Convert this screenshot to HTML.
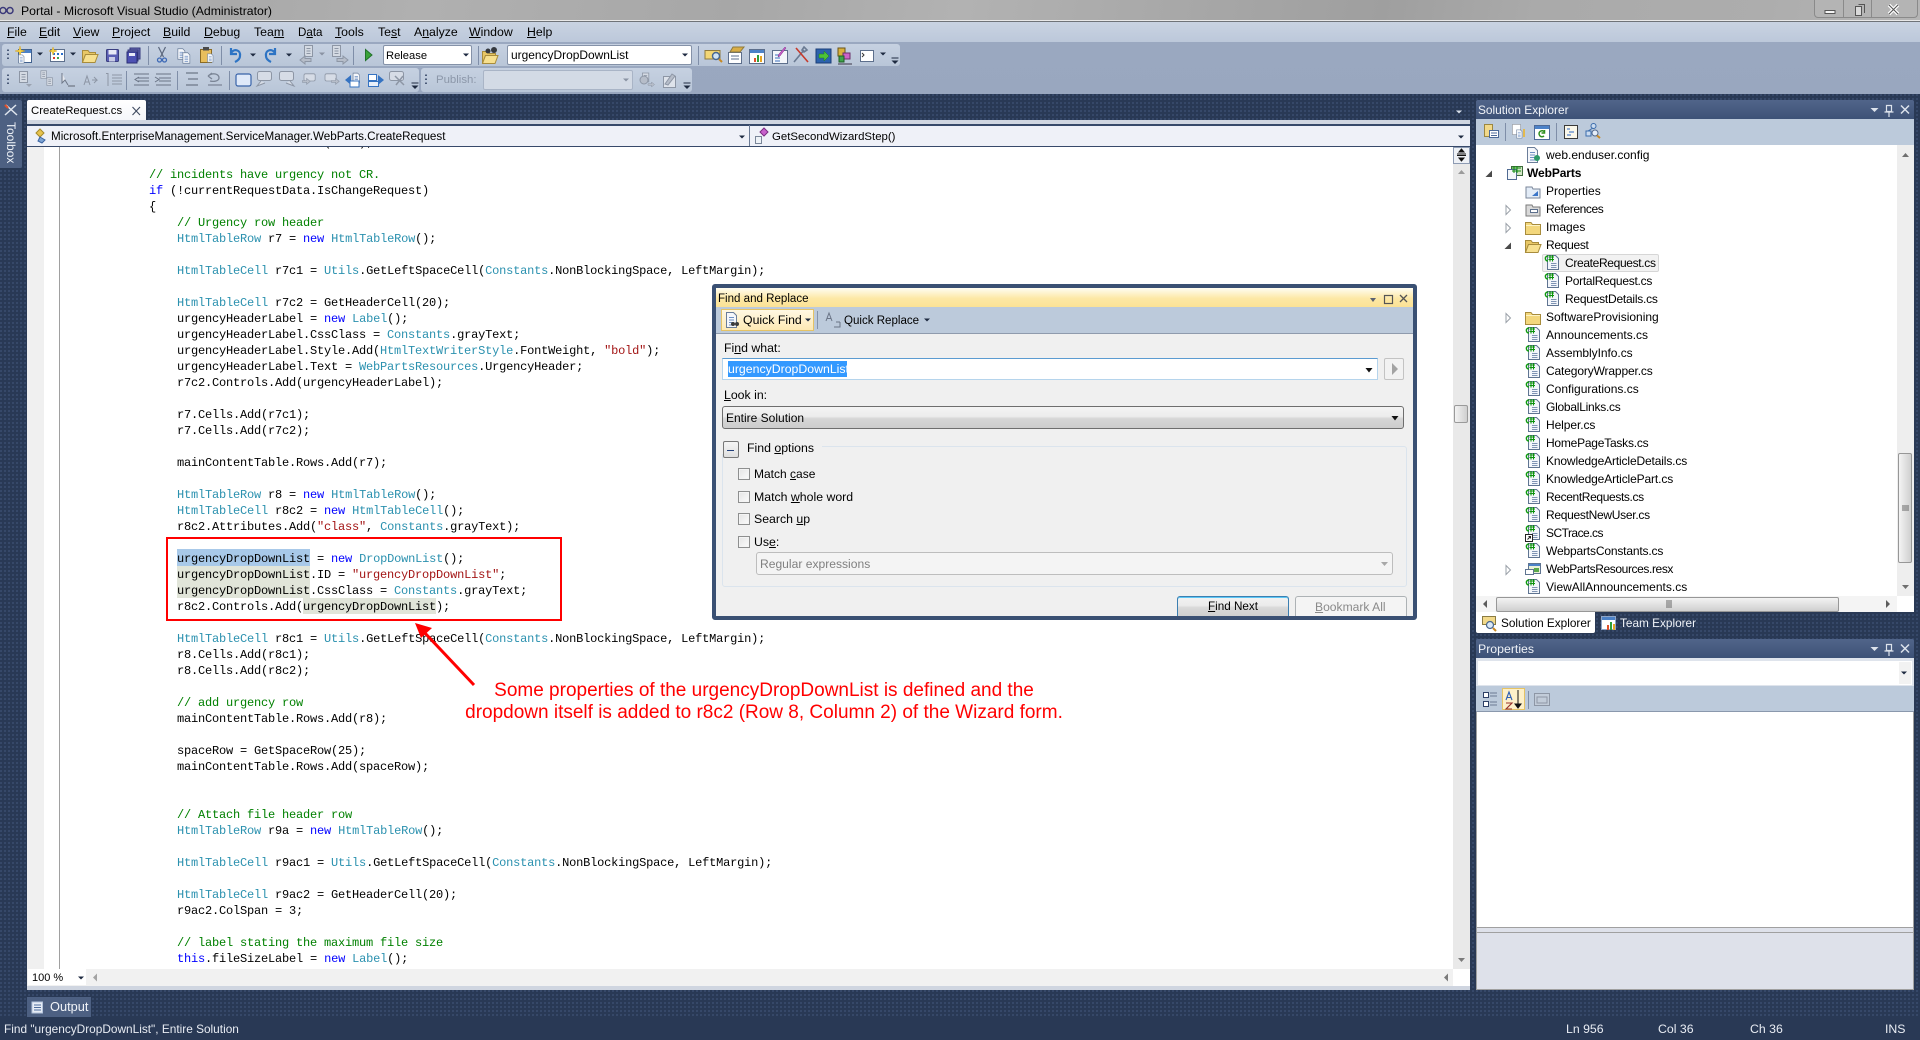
<!DOCTYPE html>
<html lang="en"><head><meta charset="utf-8"><title>Portal - Microsoft Visual Studio (Administrator)</title>
<style>
html,body{margin:0;padding:0;width:1920px;height:1040px;overflow:hidden;background:#293955;}
*{box-sizing:border-box}
body{position:relative;font:12px/16px "Liberation Sans",sans-serif;color:#000}
.a{position:absolute}
.t{position:absolute;white-space:nowrap;font:12.3px/16px "Liberation Sans",sans-serif}
.dots{background-color:#293955;background-image:radial-gradient(circle at 1px 1px,#3a4c6e .8px,transparent 1.1px);background-size:4px 4px}
.tb{position:absolute;background:linear-gradient(#c6d1e1,#b9c6d8);border-radius:3px}
pre{position:absolute;margin:0;font:12px/16px "Liberation Mono",monospace;letter-spacing:-.2px;color:#000}
.k{color:#00f}.y{color:#2b91af}.c{color:#008000}.s{color:#a31515}
.hl{position:absolute}
.tree{font-size:12px}
.cb{position:absolute;left:738px;width:12px;height:12px;background:linear-gradient(135deg,#e4e4e4,#fbfbfb);border:1px solid #8e8f8f;box-shadow:inset 0 0 0 1px #f4f4f4}
svg text{font-family:"Liberation Sans",sans-serif}
</style></head><body>

<!-- title -->
<div class="a" style="left:0;top:0;width:1920px;height:20px;background:linear-gradient(100deg,#bdbdbd 0,#a9a9a9 12%,#b0b0b0 22%,#a7a7a7 38%,#b2b2b2 50%,#a9a9a9 60%,#9f9f9f 72%,#aaa 80%,#adadad 92%,#b5b5b5 100%)"></div>
<div class="a" style="left:0;top:20px;width:1920px;height:2px;background:#e8e8e8;border-bottom:1px solid #6f7378"></div>
<div class="t" style="left:21px;top:3px;font-size:12.25px;color:#000">Portal - Microsoft Visual Studio (Administrator)</div>
<div class="a" style="left:1814px;top:0;width:104px;height:18px;border:1px solid #8a8a8a;border-top:0;border-radius:0 0 4px 4px;background:#b4b4b4"></div>
<div class="a" style="left:1843px;top:0;width:1px;height:18px;background:#8a8a8a"></div>
<div class="a" style="left:1871px;top:0;width:1px;height:18px;background:#8a8a8a"></div>

<!-- menu and toolbar bands -->
<div class="a" style="left:0;top:22px;width:1920px;height:20px;background:linear-gradient(#c9d3e2,#bcc8da)"></div>
<div class="a" style="left:0;top:42px;width:1920px;height:52px;background:linear-gradient(#9aa8c0,#99a7bf)"></div>
<span class="t" style="left:7px;top:24px"><u>F</u>ile</span>
<span class="t" style="left:39px;top:24px"><u>E</u>dit</span>
<span class="t" style="left:73px;top:24px"><u>V</u>iew</span>
<span class="t" style="left:112px;top:24px"><u>P</u>roject</span>
<span class="t" style="left:163px;top:24px"><u>B</u>uild</span>
<span class="t" style="left:204px;top:24px"><u>D</u>ebug</span>
<span class="t" style="left:254px;top:24px">Tea<u>m</u></span>
<span class="t" style="left:298px;top:25px;font-size:11.6px">D<u>a</u>ta</span>
<span class="t" style="left:335px;top:24px"><u>T</u>ools</span>
<span class="t" style="left:378px;top:24px">Te<u>s</u>t</span>
<span class="t" style="left:414px;top:24px">A<u>n</u>alyze</span>
<span class="t" style="left:469px;top:24px"><u>W</u>indow</span>
<span class="t" style="left:527px;top:24px"><u>H</u>elp</span>

<div class="tb" style="left:2px;top:44px;width:898px;height:22px"></div>
<div class="tb" style="left:2px;top:68px;width:417px;height:24px"></div>
<div class="tb" style="left:421px;top:68px;width:271px;height:24px"></div>
<div class="a" style="left:383px;top:45px;width:89px;height:20px;background:#fff;border:1px solid #8592a8;border-radius:2px"></div>
<div class="t" style="left:386px;top:48px;font-size:11.2px">Release</div>
<div class="a" style="left:507px;top:45px;width:185px;height:20px;background:#fff;border:1px solid #8592a8;border-radius:2px"></div>
<div class="t" style="left:511px;top:47px;font-size:11.95px">urgencyDropDownList</div>
<div class="t" style="left:436px;top:72px;color:#8c97a9;font-size:11.4px">Publish:</div>
<div class="a" style="left:483px;top:70px;width:150px;height:20px;background:#d3dae5;border:1px solid #a9b4c6;border-radius:2px"></div>

<!-- work area -->
<div class="a dots" style="left:0;top:94px;width:1920px;height:923px"></div>
<div class="a" style="left:0;top:1017px;width:1920px;height:23px;background:#293955"></div>

<!-- toolbox -->
<div class="a" style="left:0;top:100px;width:22px;height:68px;background:#4d6082;border-radius:0 2px 2px 0"></div>
<div class="t" style="left:3px;top:122px;width:16px;height:44px;color:#eef2f8;font-size:12px;line-height:16px;writing-mode:vertical-rl">Toolbox</div>

<!-- tab -->
<div class="a" style="left:27px;top:100px;width:119px;height:21px;background:linear-gradient(#fff,#f4f6fa);border-radius:2px 2px 0 0"></div>
<div class="t" style="left:31px;top:103px;font-size:11.4px">CreateRequest.cs</div>
<div class="a" style="left:27px;top:120px;width:1443px;height:5px;background:#d0d6e1"></div>
<div class="a" style="left:27px;top:124px;width:1443px;height:23px;background:#eff1f8;border-top:2px solid #37496a;border-bottom:1px solid #37496a"></div>
<div class="a" style="left:749px;top:125px;width:1px;height:21px;background:#6a7a94"></div>
<div class="t" style="left:51px;top:129px;font-size:11.65px">Microsoft.EnterpriseManagement.ServiceManager.WebParts.CreateRequest</div>
<div class="t" style="left:772px;top:129px;font-size:11.4px">GetSecondWizardStep()</div>

<!-- editor -->
<div class="a" style="left:27px;top:147px;width:1443px;height:822px;background:#fff;overflow:hidden">
  <div class="a" style="left:0;top:0;width:17px;height:822px;background:#f0f0f0"></div>
  <div class="a" style="left:32px;top:0;width:1px;height:822px;background:#a0a0a0"></div>
  <div class="hl" style="left:150px;top:402px;width:133px;height:17px;background:#a8c9e9"></div>
  <div class="hl" style="left:150px;top:419px;width:133px;height:32px;background:#e1e5d9"></div>
  <div class="hl" style="left:276px;top:451px;width:133px;height:16px;background:#e1e5d9"></div>
<pre style="left:122px;top:-12px"><code style="font:inherit">mainContentTable.Rows.Add(r6c1);

<span class="c">// incidents have urgency not CR.</span>
<span class="k">if</span> (!currentRequestData.IsChangeRequest)
{
    <span class="c">// Urgency row header</span>
    <span class="y">HtmlTableRow</span> r7 = <span class="k">new</span> <span class="y">HtmlTableRow</span>();

    <span class="y">HtmlTableCell</span> r7c1 = <span class="y">Utils</span>.GetLeftSpaceCell(<span class="y">Constants</span>.NonBlockingSpace, LeftMargin);

    <span class="y">HtmlTableCell</span> r7c2 = GetHeaderCell(20);
    urgencyHeaderLabel = <span class="k">new</span> <span class="y">Label</span>();
    urgencyHeaderLabel.CssClass = <span class="y">Constants</span>.grayText;
    urgencyHeaderLabel.Style.Add(<span class="y">HtmlTextWriterStyle</span>.FontWeight, <span class="s">"bold"</span>);
    urgencyHeaderLabel.Text = <span class="y">WebPartsResources</span>.UrgencyHeader;
    r7c2.Controls.Add(urgencyHeaderLabel);

    r7.Cells.Add(r7c1);
    r7.Cells.Add(r7c2);

    mainContentTable.Rows.Add(r7);

    <span class="y">HtmlTableRow</span> r8 = <span class="k">new</span> <span class="y">HtmlTableRow</span>();
    <span class="y">HtmlTableCell</span> r8c2 = <span class="k">new</span> <span class="y">HtmlTableCell</span>();
    r8c2.Attributes.Add(<span class="s">"class"</span>, <span class="y">Constants</span>.grayText);

    urgencyDropDownList = <span class="k">new</span> <span class="y">DropDownList</span>();
    urgencyDropDownList.ID = <span class="s">"urgencyDropDownList"</span>;
    urgencyDropDownList.CssClass = <span class="y">Constants</span>.grayText;
    r8c2.Controls.Add(urgencyDropDownList);

    <span class="y">HtmlTableCell</span> r8c1 = <span class="y">Utils</span>.GetLeftSpaceCell(<span class="y">Constants</span>.NonBlockingSpace, LeftMargin);
    r8.Cells.Add(r8c1);
    r8.Cells.Add(r8c2);

    <span class="c">// add urgency row</span>
    mainContentTable.Rows.Add(r8);

    spaceRow = GetSpaceRow(25);
    mainContentTable.Rows.Add(spaceRow);


    <span class="c">// Attach file header row</span>
    <span class="y">HtmlTableRow</span> r9a = <span class="k">new</span> <span class="y">HtmlTableRow</span>();

    <span class="y">HtmlTableCell</span> r9ac1 = <span class="y">Utils</span>.GetLeftSpaceCell(<span class="y">Constants</span>.NonBlockingSpace, LeftMargin);

    <span class="y">HtmlTableCell</span> r9ac2 = GetHeaderCell(20);
    r9ac2.ColSpan = 3;

    <span class="c">// label stating the maximum file size</span>
    <span class="k">this</span>.fileSizeLabel = <span class="k">new</span> <span class="y">Label</span>();</code></pre>
  <div class="a" style="left:1426px;top:0;width:17px;height:822px;background:#e9e9e9"></div>
  <div class="a" style="left:1426px;top:0;width:17px;height:17px;background:#eef1f6;border:1px solid #8d9bb3"></div>
  <div class="a" style="left:1427px;top:258px;width:14px;height:18px;background:linear-gradient(90deg,#f3f3f3,#cfcfcf);border:1px solid #9a9a9a;border-radius:2px"></div>
</div>
<!-- editor bottom -->
<div class="a" style="left:27px;top:969px;width:1443px;height:17px;background:#f1f1f1"></div>
<div class="a" style="left:28px;top:969px;width:58px;height:16px;background:#fff"></div>
<div class="a" style="left:1453px;top:969px;width:17px;height:17px;background:#fff"></div>
<div class="a" style="left:27px;top:986px;width:1443px;height:4px;background:#cfd5e0"></div>
<div class="t" style="left:32px;top:970px;font-size:11px">100 %</div>

<!-- output tab & status -->
<div class="a" style="left:27px;top:997px;width:64px;height:20px;background:#4d6082"></div>
<div class="t" style="left:50px;top:999px;color:#f0f3f8;font-size:12.8px">Output</div>
<div class="t" style="left:4px;top:1021px;color:#e8ecf3;font-size:11.85px">Find "urgencyDropDownList", Entire Solution</div>
<div class="t" style="left:1566px;top:1021px;color:#e8ecf3">Ln 956</div>
<div class="t" style="left:1658px;top:1021px;color:#e8ecf3">Col 36</div>
<div class="t" style="left:1750px;top:1021px;color:#e8ecf3">Ch 36</div>
<div class="t" style="left:1885px;top:1021px;color:#e8ecf3">INS</div>

<!-- solution explorer -->
<div class="a" style="left:1476px;top:100px;width:438px;height:19px;background:linear-gradient(#51658a,#3d5277);border-radius:2px 2px 0 0"></div>
<div class="t" style="left:1478px;top:102px;color:#f0f3f8;font-size:11.9px">Solution Explorer</div>
<div class="a" style="left:1476px;top:119px;width:438px;height:26px;background:#bccadb"></div>
<div class="a" style="left:1476px;top:145px;width:421px;height:451px;background:#fff"></div>
<div class="a" style="left:1897px;top:145px;width:17px;height:451px;background:#eee"></div>
<div class="a" style="left:1898px;top:453px;width:14px;height:110px;background:linear-gradient(90deg,#f4f4f4,#cfcfcf);border:1px solid #979797;border-radius:2px"></div>
<div class="a" style="left:1476px;top:596px;width:438px;height:16px;background:#f4f4f4"></div>
<div class="a" style="left:1496px;top:597px;width:343px;height:15px;background:linear-gradient(#f3f3f3,#cfcfcf);border:1px solid #979797;border-radius:2px"></div>
<div class="a" style="left:1897px;top:596px;width:17px;height:16px;background:#fff"></div>
<div class="a" style="left:1542px;top:254px;width:117px;height:18px;background:#f2f2f2;border:1px solid #d6d6d6;border-radius:2px"></div>
<div class="tree">
<span class="t tree" style="left:1546px;top:147px">web.enduser.config</span>
<span class="t tree" style="left:1527px;top:165px;font-weight:bold;letter-spacing:-.1px">WebParts</span>
<span class="t tree" style="left:1546px;top:183px">Properties</span>
<span class="t tree" style="left:1546px;top:201px;letter-spacing:-.4px">References</span>
<span class="t tree" style="left:1546px;top:219px">Images</span>
<span class="t tree" style="left:1546px;top:237px;letter-spacing:-.3px">Request</span>
<span class="t tree" style="left:1565px;top:255px;letter-spacing:-.34px">CreateRequest.cs</span>
<span class="t tree" style="left:1565px;top:273px;letter-spacing:-.27px">PortalRequest.cs</span>
<span class="t tree" style="left:1565px;top:291px;letter-spacing:-.24px">RequestDetails.cs</span>
<span class="t tree" style="left:1546px;top:309px">SoftwareProvisioning</span>
<span class="t tree" style="left:1546px;top:327px">Announcements.cs</span>
<span class="t tree" style="left:1546px;top:345px;letter-spacing:-.05px">AssemblyInfo.cs</span>
<span class="t tree" style="left:1546px;top:363px;letter-spacing:-.14px">CategoryWrapper.cs</span>
<span class="t tree" style="left:1546px;top:381px">Configurations.cs</span>
<span class="t tree" style="left:1546px;top:399px;letter-spacing:-.25px">GlobalLinks.cs</span>
<span class="t tree" style="left:1546px;top:417px;letter-spacing:-.08px">Helper.cs</span>
<span class="t tree" style="left:1546px;top:435px;letter-spacing:-.23px">HomePageTasks.cs</span>
<span class="t tree" style="left:1546px;top:453px;letter-spacing:-.14px">KnowledgeArticleDetails.cs</span>
<span class="t tree" style="left:1546px;top:471px;letter-spacing:-.13px">KnowledgeArticlePart.cs</span>
<span class="t tree" style="left:1546px;top:489px;letter-spacing:-.37px">RecentRequests.cs</span>
<span class="t tree" style="left:1546px;top:507px;letter-spacing:-.29px">RequestNewUser.cs</span>
<span class="t tree" style="left:1546px;top:525px;letter-spacing:-.53px">SCTrace.cs</span>
<span class="t tree" style="left:1546px;top:543px;letter-spacing:-.165px">WebpartsConstants.cs</span>
<span class="t tree" style="left:1546px;top:561px;letter-spacing:-.4px">WebPartsResources.resx</span>
<span class="t tree" style="left:1546px;top:579px">ViewAllAnnouncements.cs</span>
</div>
<!-- bottom tabs -->
<div class="a" style="left:1476px;top:612px;width:119px;height:21px;background:#fff;border-radius:0 0 2px 2px"></div>
<div class="t" style="left:1501px;top:615px;font-size:11.8px">Solution Explorer</div>
<div class="t" style="left:1620px;top:615px;font-size:11.8px;color:#f0f3f8">Team Explorer</div>

<!-- properties -->
<div class="a" style="left:1476px;top:639px;width:438px;height:19px;background:linear-gradient(#51658a,#3d5277);border-radius:2px 2px 0 0"></div>
<div class="t" style="left:1478px;top:641px;color:#f0f3f8;font-size:12.3px">Properties</div>
<div class="a" style="left:1476px;top:658px;width:438px;height:28px;background:#dfe4ec"></div>
<div class="a" style="left:1478px;top:661px;width:434px;height:24px;background:#fff"></div>
<div class="a" style="left:1899px;top:662px;width:12px;height:22px;background:#f2f2f2"></div>
<div class="a" style="left:1476px;top:686px;width:438px;height:26px;background:#bccadb;border-bottom:1px solid #8a98ad"></div>
<div class="a" style="left:1502px;top:688px;width:23px;height:22px;background:#fdf0c9;border:1px solid #e5c365"></div>
<div class="a" style="left:1476px;top:712px;width:438px;height:278px;background:#fff;border:1px solid #a0a0a0;border-top:0"></div>
<div class="a" style="left:1477px;top:927px;width:436px;height:62px;background:#dee1ea;border-top:1px solid #a0a0a0"></div>
<div class="a" style="left:1477px;top:932px;width:436px;height:1px;background:#a0a0a0"></div>

<!-- dialog -->
<div class="a" style="left:712px;top:284px;width:705px;height:336px;background:#f0f0f0;border:4px solid #3a5073;border-radius:3px"></div>
<div class="a" style="left:716px;top:288px;width:697px;height:19px;background:linear-gradient(#fffdf2,#fde8a5 55%,#fbe295)"></div>
<div class="a" style="left:716px;top:307px;width:697px;height:27px;background:#bccadb;border-bottom:1px solid #8f9bad"></div>
<div class="a" style="left:721px;top:309px;width:93px;height:22px;background:linear-gradient(#fff8e3,#fde9b4);border:1px solid #e5c365"></div>
<div class="a" style="left:817px;top:311px;width:1px;height:18px;background:#8593a9"></div>
<div class="t" style="left:718px;top:291px;font-size:11.55px">Find and Replace</div>
<div class="t" style="left:743px;top:312px">Quick Find</div>
<div class="t" style="left:844px;top:313px;font-size:11.55px">Quick Replace</div>
<div class="t" style="left:724px;top:340px">Fi<u>n</u>d what:</div>
<div class="a" style="left:722px;top:358px;width:656px;height:22px;background:#fff;border:1px solid #5b9bd1;border-bottom-color:#b5d4ec;border-left-color:#b5d4ec;border-right-color:#b5d4ec"></div>
<div class="a" style="left:728px;top:361px;width:119px;height:16px;background:#3399ff"></div>
<div class="t" style="left:728px;top:361px;color:#fff">urgencyDropDownList</div>
<div class="a" style="left:1384px;top:358px;width:20px;height:22px;background:#f2f2f2;border:1px solid #c3c3c3;border-radius:2px"></div>
<div class="t" style="left:724px;top:387px"><u>L</u>ook in:</div>
<div class="a" style="left:722px;top:406px;width:682px;height:23px;background:linear-gradient(#f4f4f4 0,#ececec 45%,#d6d6d6 55%,#cdcdcd 100%);border:1px solid #6e6e6e;border-radius:3px"></div>
<div class="t" style="left:726px;top:410px;font-size:12px">Entire Solution</div>
<div class="a" style="left:722px;top:446px;width:685px;height:141px;border:1px solid #dbe4ed;border-radius:3px"></div>
<div class="a" style="left:722px;top:440px;width:100px;height:14px;background:#f0f0f0"></div>
<div class="a" style="left:723px;top:441px;width:16px;height:17px;background:linear-gradient(#f5f5f5,#dfdfdf);border:1px solid #777;border-radius:2px"></div>
<div class="a" style="left:727px;top:450px;width:7px;height:1px;background:#223f7a"></div>
<div class="t" style="left:747px;top:440px">Find <u>o</u>ptions</div>
<div class="cb" style="top:468px"></div><div class="t" style="left:754px;top:466px;font-size:12px">Match <u>c</u>ase</div>
<div class="cb" style="top:491px"></div><div class="t" style="left:754px;top:489px">Match <u>w</u>hole word</div>
<div class="cb" style="top:513px"></div><div class="t" style="left:754px;top:511px">Search <u>u</u>p</div>
<div class="cb" style="top:536px"></div><div class="t" style="left:754px;top:534px">Us<u>e</u>:</div>
<div class="a" style="left:756px;top:552px;width:637px;height:23px;background:#f4f4f4;border:1px solid #bdbdbd;border-radius:3px"></div>
<div class="t" style="left:760px;top:556px;color:#808080;font-size:12.1px">Regular expressions</div>
<div class="a" style="left:1177px;top:596px;width:112px;height:20px;background:linear-gradient(#f2f2f2,#ebebeb 45%,#d9d9d9 55%,#cfcfcf);border:1px solid #3c7fb1;border-bottom:0;border-radius:3px 3px 0 0;box-shadow:inset 0 1px 0 #5cc7f5"></div>
<div class="t" style="left:1208px;top:599px;font-size:11.7px"><u>F</u>ind Next</div>
<div class="a" style="left:1295px;top:596px;width:112px;height:20px;background:#f4f4f4;border:1px solid #adb2b5;border-bottom:0;border-radius:3px 3px 0 0"></div>
<div class="t" style="left:1315px;top:599px;color:#8a8a8a;font-size:12.1px"><u>B</u>ookmark All</div>

<!-- annotation -->
<div class="a" style="left:166px;top:537px;width:396px;height:84px;border:2px solid #f00"></div>
<div class="a" style="left:464px;top:680px;width:600px;text-align:center;color:#f00;font:19px/22px 'Liberation Sans',sans-serif;white-space:nowrap">Some properties of the urgencyDropDownList is defined and the<br>dropdown itself is added to r8c2 (Row 8, Column 2) of the Wizard form.</div>

<!-- icons overlay -->
<svg class="a" style="left:0;top:0;pointer-events:none" width="1920" height="1040" viewBox="0 0 1920 1040" fill="none" shape-rendering="auto">
<defs>
 <g id="cs">
  <path d="M-4.500-7.500H3.500L6.500-4.500V6.500H-4.500Z" fill="#f3f6fb" stroke="#5f7491"/>
  <path d="M-1 0.500H4.500M-1 2.500H4.500M-1 4.500H4.500" stroke="#7e93b3"/>
  <path d="M-4-7C-7.500-7-7.500-2-4-2" stroke="#0f9a0f" stroke-width="1.400"/>
  <path d="M-2-8V-1.500M.5-8V-1.500M-3.500-6H2M-3.500-3.500H2" stroke="#0c930c" stroke-width="1.100"/>
 </g>
 <g id="folder">
  <path d="M-7.500-5.500H-2L-.5-3.500H7.500V6.500H-7.500Z" fill="#f3d77c" stroke="#a88c3c"/>
  <path d="M-7-2.500H7" stroke="#fdf3c4"/>
 </g>
 <g id="ofold">
  <path d="M-7.500-5.500H-2L-.5-3.500H5.500V-1.500H-4.500L-7.500 6.500Z" fill="#e8c766" stroke="#a88c3c"/>
  <path d="M-4.500-1.500H8L5 6.500H-7.500Z" fill="#f7e08f" stroke="#a88c3c"/>
 </g>
 <path id="open" d="M-2-4.500L2.500 0-2 4.500Z" fill="#fff" stroke="#9aa0a8"/>
 <path id="exp" d="M3-3.500V3H-3.500Z" fill="#4a4a4a"/>
 <path id="dn" d="M-3-1.500H3L0 1.500Z" fill="#1e2a40"/>
 <path id="dng" d="M-3-1.500H3L0 1.500Z" fill="#8a93a3"/>
 <g id="grip"><path d="M0-5.500V-4M0-1.500V0M0 2.500V4" stroke="#4a5a78" stroke-width="2"/></g>
 <g id="ovf"><path d="M-3.500-2H3.500" stroke="#1e2a40"/><path d="M-3.500 .5H3.500L0 4Z" fill="#1e2a40"/></g>
 <g id="win"><rect x="-6.500" y="-6.500" width="13" height="13" fill="#fff" stroke="#41618e"/><rect x="-6" y="-6" width="12" height="3" fill="#4c82c8"/></g>
 <g id="doc"><path d="M-4.500-7.500H2.500L5.500-4.500V7.500H-4.500Z" fill="#f5f7fb" stroke="#6a7d99"/><path d="M-2 -2.500H3M-2 0H3M-2 2.500H3M-2 5H3" stroke="#6d8fc2"/></g>
 <g id="gdoc"><path d="M-4.500-7.500H3.500V3.500H-4.500Z" fill="#d4dae3" stroke="#8d96a5"/><path d="M-2.500-4.500H1.500M-2.500-2H1.500M-2.500.5H1.500" stroke="#8d96a5"/></g>
 <g id="garr"><path d="M-6-2.500H1V-6L7 -1 1 4V.5H-6Z" fill="#b6bdc9" stroke="#8d96a5"/></g>
 <g id="bub"><rect x="-7.500" y="-6.500" width="14" height="9" rx="2" fill="#d6dce6" stroke="#8d96a5"/></g>
</defs>

<!-- title bar icon and window buttons -->
<path d="M2 8a3 3 0 1 1 0 6 3 3 0 0 1 0-6ZM9 8a3 3 0 1 1 0 6 3 3 0 0 1 0-6Z" transform="translate(1 -.5)" stroke="#3c3a7a" stroke-width="1.500"/>
<rect x="1825" y="10.500" width="10" height="3" fill="#f5f5f5" stroke="#555"/>
<rect x="1855.500" y="6.500" width="6" height="9" fill="#d9d9d9" stroke="#555"/><path d="M1858.500 4.500H1864.500V13" stroke="#555"/>
<path d="M1889 5L1898 14M1898 5L1889 14" stroke="#fff" stroke-width="3.400"/><path d="M1889 5L1898 14M1898 5L1889 14" stroke="#555" stroke-width="1.100"/>

<!-- toolbar row 1 -->
<g>
<use href="#grip" x="8" y="55"/>
<use href="#win" x="25" y="56"/><path d="M20 46l1 4 4 1-4 1-1 4-1-4-4-1 4-1Z" fill="#f5d44a" stroke="#d9a520" stroke-width=".5"/><use href="#doc" transform="translate(21 59) scale(.55)"/>
<use href="#dn" x="40" y="54"/>
<rect x="50.500" y="49.500" width="14" height="12" fill="#fff" stroke="#5d6f8c"/><path d="M53 53h2v2h-2zM57 53h2v2h-2zM61 53h2v2h-2z" fill="#2a6ecb"/><path d="M53 57h2v2h-2z" fill="#d93a2b"/><path d="M57 57h2v2h-2z" fill="#3fa34a"/><path d="M53 47l1 3 3 1-3 1-1 3-1-3-3-1 3-1Z" fill="#f5d44a" stroke="#d9a520" stroke-width=".5"/>
<use href="#dn" x="73" y="54"/>
<use href="#ofold" x="90" y="56"/>
<rect x="106.500" y="49.500" width="12" height="12" rx="1" fill="#5a5eb3" stroke="#3a3e80"/><rect x="108.500" y="50" width="8" height="4.500" fill="#e8eaf6"/><rect x="109" y="57" width="6" height="4.500" fill="#c9cde6"/>
<rect x="130" y="48" width="10" height="11" fill="#6669b0" stroke="#34387c"/><rect x="128" y="50" width="10" height="11" fill="#6669b0" stroke="#34387c"/><rect x="127" y="52" width="10" height="11" fill="#4d51b3" stroke="#2a2e74"/><rect x="129" y="53" width="6" height="3" fill="#e7e9f7"/>
<path d="M148.500 46V65" stroke="#7f8ea8"/>
<path d="M158.500 47L163.500 57M165.500 47L160.500 57" stroke="#5b677c" stroke-width="1.200"/><circle cx="159.500" cy="60" r="2" stroke="#3d69b6" stroke-width="1.300"/><circle cx="164.500" cy="60" r="2" stroke="#3d69b6" stroke-width="1.300"/>
<use href="#doc" transform="translate(181 54) scale(.7)"/><use href="#doc" transform="translate(186 58) scale(.7)"/>
<rect x="200.500" y="49.500" width="11" height="13" fill="#e8be5d" stroke="#8a6a24"/><rect x="203" y="47" width="6" height="3.500" fill="#4a4a4a"/><use href="#doc" transform="translate(210 58) scale(.55)"/>
<path d="M221.500 46V65" stroke="#7f8ea8"/>
<path d="M231 48V54H237M231 53C234 48 241 50 240 56 240 59 237 61 235 62" stroke="#2e74c4" stroke-width="2.200"/>
<use href="#dn" x="253" y="55"/>
<path d="M275 48V54H269M275 53C272 48 265 50 266 56 266 59 269 61 271 62" stroke="#2e74c4" stroke-width="2.200"/>
<use href="#dn" x="289" y="55"/>
<use href="#gdoc" x="309" y="53"/><path d="M300 60l5-4v2.500h6v3h-6V64Z" fill="#b6bdc9" stroke="#8d96a5"/>
<use href="#dng" x="322" y="54"/>
<use href="#gdoc" x="337" y="53"/><path d="M348 60l-5-4v2.500h-6v3h6V64Z" fill="#b6bdc9" stroke="#8d96a5"/>
<path d="M353.500 46V65" stroke="#7f8ea8"/>
<path d="M365.500 49.500L372 55 365.500 60.500Z" fill="#3aa238" stroke="#21712a"/>
<use href="#dn" x="466" y="55"/>
<path d="M478.500 46V65" stroke="#7f8ea8"/>
<use href="#ofold" x="490" y="57"/><circle cx="494" cy="50" r="3" fill="#35393f"/><circle cx="488" cy="51" r="2.500" fill="#35393f"/>
<use href="#dn" x="685" y="55"/>
<path d="M698.500 46V65" stroke="#7f8ea8"/>
<path d="M705 50.500H720V59H705Z" fill="#f2d675" stroke="#8f7a3d"/><circle cx="716" cy="56" r="3.500" fill="#cfe3f5" stroke="#47668f" stroke-width="1.400"/><path d="M719 59l3 3" stroke="#c78924" stroke-width="2"/>
<rect x="728.500" y="52.500" width="13" height="11" fill="#fff" stroke="#5d6f8c"/><path d="M731 56h8M731 59h8" stroke="#5d6f8c"/><path d="M733 47L744 47 740 52H730Z" fill="#d9ad45" stroke="#8f7a3d"/>
<rect x="749.500" y="49.500" width="15" height="14" fill="#fff" stroke="#5d6f8c"/><rect x="750" y="50" width="14" height="3" fill="#4c82c8"/><path d="M755 62V58" stroke="#e0502a" stroke-width="2"/><path d="M758 62V55" stroke="#2f9f38" stroke-width="2"/><path d="M761 62V56" stroke="#e8a520" stroke-width="2"/>
<rect x="772.500" y="50.500" width="15" height="13" fill="#f4f7fb" stroke="#5d6f8c"/><path d="M775 55h5M775 58h5M775 61h5" stroke="#3a6fbd"/><path d="M786 48l-6 8-2 1 1-3 6-7Z" fill="#c65cc9" stroke="#7d2e82" stroke-width=".5"/>
<path d="M794 62L804 50M804 47l3 3-3 2-2-2Z" stroke="#6a7a92" stroke-width="1.600"/><path d="M796 48L808 62" stroke="#c63a2b" stroke-width="1.600"/>
<rect x="816" y="49" width="15" height="14" fill="#2c62ad" stroke="#1d3f78"/><path d="M819 54h5v-3l5 5-5 5v-3h-5Z" fill="#4dc338" stroke="#1f7a1c" stroke-width=".5"/>
<rect x="838" y="48" width="7" height="8" fill="#d9b13d" stroke="#6a5418"/><rect x="843" y="53" width="7" height="6" fill="#cc63c7" stroke="#6a2f68"/><rect x="839" y="56" width="5" height="6" fill="#3fa34a" stroke="#1e5e24"/><path d="M838 64H852" stroke="#667" stroke-width="1.500"/>
<rect x="860.500" y="50.500" width="13" height="11" fill="#fff" stroke="#5d6f8c"/><path d="M862 53l2 2-2 2" stroke="#333"/>
<use href="#dn" x="883" y="54"/>
<use href="#ovf" x="895" y="60"/>
</g>

<!-- toolbar row 2 -->
<g>
<use href="#grip" x="8" y="80"/>
<use href="#gdoc" x="24" y="79"/><path d="M26 84h6l-3 3Z" fill="#9aa2b0"/>
<use href="#gdoc" transform="translate(44 76) scale(.7)"/><use href="#gdoc" transform="translate(50 83) scale(.7)"/>
<path d="M62 73V83L65 80 68 85" stroke="#6e7788" fill="#e5e8ee"/><path d="M68 86H75" stroke="#8d96a5" stroke-width="2"/>
<path d="M84 85L87 76 90 85M85 82H89M92 80H97L94 77M97 80L94 83" stroke="#8d96a5"/>
<path d="M106 73.500H108V86M112 75H122M112 78H122M112 81H122M112 84H122" stroke="#8d96a5"/>
<path d="M126.500 71V90" stroke="#7f8ea8"/>
<path d="M134 74H149M137 78H149M137 81H149M134 85H149M139 77L135 79.500 139 82" stroke="#6a7486"/>
<path d="M156 74H171M159 78H171M159 81H171M156 85H171M155 77L159 79.500 155 82" stroke="#6a7486"/>
<path d="M177.500 71V90" stroke="#7f8ea8"/>
<path d="M186 73H198M188 79H198M186 85H198" stroke="#7b8596" stroke-width="1.500"/>
<path d="M208 76C213 72 219 74 219 78 219 81 214 82 210 81M208 76L212 73M208 76L212 79M208 85H222" stroke="#7b8596" stroke-width="1.300"/>
<path d="M229.500 71V90" stroke="#7f8ea8"/>
<rect x="236" y="74" width="15" height="12" rx="2" fill="#dfe9f9" stroke="#3863a9" stroke-width="1.200"/>
<use href="#bub" x="265" y="78"/><path d="M261 81l-4 5 8-3" fill="#d6dce6" stroke="#8d96a5"/>
<use href="#bub" x="287" y="78"/><path d="M290 81l4 5-8-3" fill="#d6dce6" stroke="#8d96a5"/>
<use href="#bub" transform="translate(310 79) scale(.8)"/><use href="#garr" transform="translate(306 82) scale(.6)"/>
<use href="#bub" transform="translate(331 79) scale(.8)"/><use href="#garr" transform="translate(335 82) scale(.6)"/>
<path d="M345 80L351 75V85Z" fill="#3573c2"/><use href="#doc" transform="translate(356 78) scale(.65)"/><rect x="350" y="81" width="9" height="6" fill="#fff" stroke="#3573c2"/>
<path d="M384 80L378 75V85Z" fill="#3573c2"/><rect x="368.500" y="74.500" width="8" height="6" fill="#fff" stroke="#3573c2"/><rect x="368.500" y="81.500" width="10" height="5" fill="#e9f0fa" stroke="#3573c2"/>
<use href="#bub" x="397" y="78"/><path d="M395 76L404 85M403 76L396 85" stroke="#8d96a5" stroke-width="1.500"/>
<use href="#ovf" x="415" y="85"/>
<use href="#grip" x="426" y="80"/>
<use href="#dng" x="626" y="80"/>
<use href="#gdoc" transform="translate(646 79) scale(.8)"/><circle cx="644" cy="80" r="4" fill="#b6bdc9" stroke="#8d96a5"/><use href="#garr" transform="translate(651 85) scale(.5)"/>
<rect x="663.500" y="76.500" width="12" height="11" fill="#dee3eb" stroke="#8d96a5"/><path d="M665 84L672 74 675 76 668 85Z" fill="#b6bdc9" stroke="#8d96a5"/>
<use href="#ovf" x="687" y="85"/>
</g>

<!-- toolbox icon -->
<path d="M5 115L16 105M6 105L17 115" stroke="#dfe5ee" stroke-width="1.500"/><path d="M5 105l3 3" stroke="#e0502a" stroke-width="2"/>

<!-- tab close, nav icons -->
<path d="M132.500 107L140 115M140 107L132.500 115" stroke="#3e4a5f" stroke-width="1.100"/>
<path d="M1456 110.500h6l-3 3Z" fill="#d8dfe9"/>
<path d="M40 129l4 4-4 4-4-4Z" fill="#e8c34f" stroke="#a58a2c"/><path d="M40 137l5 3-3 3-4-2Z" fill="#7ea4d4" stroke="#3963a2"/>
<use href="#dn" x="742" y="137"/>
<path d="M764 128l4 4-4 4-4-4Z" fill="#c861cc" stroke="#7a2c82"/><rect x="755.500" y="136.500" width="6" height="7" fill="#eef2f7" stroke="#7a8699"/>
<use href="#dn" x="1461" y="137"/>
<!-- editor scroll -->
<path d="M1457 154H1466M1461.500 149L1459 152H1464ZM1461.500 161L1459 158H1464ZM1457 155.500H1466" stroke="#111" fill="#111"/>
<path d="M1458 174L1461.500 170 1465 174Z" fill="#9b9b9b"/>
<path d="M1458 958H1465L1461.500 962Z" fill="#7b7b7b"/>
<path d="M1448 973.500V981.500L1444 977.500Z" fill="#7b7b7b"/>
<path d="M97 973.500V981.500L93 977.500Z" fill="#a3a3a3"/>
<use href="#dn" x="81" y="978"/>
<!-- output icon -->
<rect x="32" y="1002" width="10.500" height="11" fill="#e7edf6" stroke="#b4c4dc"/><path d="M34 1005H41M34 1007.500H41M34 1010H41" stroke="#4e6c9c"/>

<!-- SE title buttons -->
<g id="panelbtn">
<path d="M1870.500 108H1878.500L1874.500 112Z" fill="#dde3ec"/>
<path d="M1886.500 105.500H1891.500V111.500H1886.500ZM1884.500 112H1893.500M1889 112V117" stroke="#dde3ec" stroke-width="1.200"/>
<path d="M1901 105.500L1909 113.500M1909 105.500L1901 113.500" stroke="#dde3ec" stroke-width="1.500"/>
<path d="M1870.500 647H1878.500L1874.500 651Z" fill="#dde3ec"/>
<path d="M1886.500 644.500H1891.500V650.500H1886.500ZM1884.500 651H1893.500M1889 651V656" stroke="#dde3ec" stroke-width="1.200"/>
<path d="M1901 644.500L1909 652.500M1909 644.500L1901 652.500" stroke="#dde3ec" stroke-width="1.500"/>
</g>
<!-- SE toolbar -->
<rect x="1484.500" y="124.500" width="8" height="12" fill="#f2d98a" stroke="#9c8740"/><rect x="1489.500" y="130.500" width="9" height="7" fill="#fff" stroke="#4d6a98"/><path d="M1491 133H1497M1491 135.500H1497" stroke="#4d6a98"/>
<path d="M1505.500 123V141" stroke="#7f8ea8"/>
<rect x="1512.500" y="124.500" width="8" height="10" fill="#fff" stroke="#8a8a8a" stroke-dasharray="1 1"/><path d="M1523 129V137H1525V129Z" fill="#e2b94f"/><use href="#doc" transform="translate(1519 134) scale(.55)"/>
<rect x="1534.500" y="125.500" width="15" height="14" fill="#fff" stroke="#4d6a98"/><rect x="1535" y="126" width="14" height="3" fill="#4c82c8"/><path d="M1544.500 132A3 3 0 1 0 1544 136M1544.500 130V133H1541.500" stroke="#2f8f1f" stroke-width="1.500"/>
<path d="M1556.500 123V141" stroke="#7f8ea8"/>
<rect x="1564.500" y="125.500" width="13" height="13" fill="#fbf8ea" stroke="#3a3a3a"/><path d="M1567 129H1570M1569 132H1574M1567 135H1571" stroke="#2d66c2"/>
<circle cx="1593.500" cy="126" r="2.500" fill="#cbdbef" stroke="#3a6cac"/><path d="M1593 128L1588 131" stroke="#3a6cac"/><rect x="1586" y="131" width="5" height="5" fill="#cbdbef" stroke="#3a6cac"/><circle cx="1595" cy="133" r="3" fill="#e6eef8" stroke="#52698d"/><path d="M1597 135.500L1600 138" stroke="#c98a26" stroke-width="2"/>

<!-- tree icons -->
<g id="treeicons">
<use href="#doc" x="1532" y="155"/><circle cx="1537" cy="158" r="3" fill="#2c9a68"/>
<rect x="1511.500" y="166.500" width="11" height="9" fill="#d3e5c6" stroke="#3e6b3c"/><rect x="1507.500" y="169.500" width="9" height="10" fill="#f4f7fb" stroke="#506a92"/><path d="M1514 166V173M1517 166V173M1512 168H1521M1512 171H1521" stroke="#0c8a0c"/>
<path d="M1526 187H1532L1533 189H1540V198H1526Z" fill="#e3ecf7" stroke="#7a8699"/><path d="M1532 196l6-5v5Z" fill="#3a75c8"/>
<path d="M1526 205H1532L1533 207H1540V216H1526Z" fill="#d9d9d9" stroke="#7a7a7a"/><rect x="1530.500" y="209.500" width="7" height="3" fill="#fff" stroke="#5c6f8c"/>
<use href="#folder" x="1533" y="228"/>
<use href="#ofold" x="1533" y="246"/>
<use href="#folder" x="1533" y="318"/>
<use href="#cs" x="1552" y="263"/><use href="#cs" x="1552" y="281"/><use href="#cs" x="1552" y="299"/>
<use href="#cs" x="1533" y="335"/><use href="#cs" x="1533" y="353"/><use href="#cs" x="1533" y="371"/><use href="#cs" x="1533" y="389"/>
<use href="#cs" x="1533" y="407"/><use href="#cs" x="1533" y="425"/><use href="#cs" x="1533" y="443"/><use href="#cs" x="1533" y="461"/>
<use href="#cs" x="1533" y="479"/><use href="#cs" x="1533" y="497"/><use href="#cs" x="1533" y="515"/>
<use href="#cs" x="1533" y="533"/><rect x="1525.500" y="534.500" width="7" height="7" fill="#fff" stroke="#222"/><path d="M1527.500 539.500L1530.500 536.500M1528.500 536.500H1530.500V538.500" stroke="#222"/>
<use href="#cs" x="1533" y="551"/>
<rect x="1528.500" y="563.500" width="12" height="10" fill="#eaf1d9" stroke="#5f7491"/><rect x="1529" y="564" width="11" height="2" fill="#4c82c8"/><rect x="1534" y="568" width="5" height="4" fill="#5aa94a"/><rect x="1525.500" y="569.500" width="8" height="5" fill="#fff" stroke="#5f7491"/>
<use href="#cs" x="1533" y="587"/>
<use href="#open" x="1508" y="210"/><use href="#open" x="1508" y="228"/><use href="#open" x="1508" y="318"/><use href="#open" x="1508" y="570"/>
<use href="#exp" x="1489" y="174"/><use href="#exp" x="1508" y="246"/>
</g>
<!-- tree scrolls -->
<path d="M1902 157L1905.500 153 1909 157Z" fill="#6f6f6f"/>
<path d="M1902 585H1909L1905.500 589Z" fill="#6f6f6f"/>
<path d="M1902 506H1909M1902 508H1909M1902 510H1909" stroke="#666"/>
<path d="M1667 600V608M1669 600V608M1671 600V608" stroke="#666"/>
<path d="M1487 600V608L1483 604Z" fill="#5c5c5c"/>
<path d="M1886 600V608L1890 604Z" fill="#5c5c5c"/>
<!-- bottom tab icons -->
<rect x="1482.500" y="616.500" width="13" height="8" fill="#f2d98a" stroke="#8a7b42"/><circle cx="1490" cy="625" r="3.500" fill="#dbe9f7" stroke="#4a688f" stroke-width="1.200"/><path d="M1493 628L1496 631" stroke="#c98a26" stroke-width="2"/>
<rect x="1601.500" y="616.500" width="14" height="13" fill="#fff" stroke="#8fa5c6"/><rect x="1602" y="617" width="13" height="3" fill="#4c82c8"/><path d="M1608 630V625" stroke="#e0502a" stroke-width="2"/><path d="M1611 630V622" stroke="#2f9f38" stroke-width="2"/><path d="M1614 630V624" stroke="#e8a520" stroke-width="2"/>
<!-- properties toolbar -->
<use href="#dn" x="1904" y="673"/>
<rect x="1483.500" y="692.500" width="5" height="5" fill="#fff" stroke="#2d3f66"/><rect x="1483.500" y="701.500" width="5" height="5" fill="#fff" stroke="#2d3f66"/><path d="M1490 693H1497M1490 696H1497M1490 702H1497M1490 705H1497" stroke="#6d7b93"/>
<path d="M1506 700L1509 692 1512 700M1507 697.500H1511" stroke="#2d5fb6" stroke-width="1.100"/><path d="M1506 703H1512L1506 709H1512" stroke="#96302a" stroke-width="1.100"/><path d="M1518 690V707M1515 704L1518 708 1521 704Z" stroke="#111" fill="#111"/>
<path d="M1528.500 691V709" stroke="#7f8ea8"/>
<rect x="1534.500" y="693.500" width="15" height="12" fill="#c2ccd9" stroke="#8d96a5"/><path d="M1537 697H1547V703H1537Z" stroke="#8d96a5"/>

<!-- dialog chrome icons -->
<path d="M1370 298H1376L1373 302Z" fill="#5c6270"/>
<rect x="1384.500" y="295.500" width="8" height="8" stroke="#555" stroke-width="1.200"/>
<path d="M1400 295L1407 302M1407 295L1400 302" stroke="#555" stroke-width="1.300"/>
<use href="#doc" x="731" y="320"/><circle cx="733" cy="324" r="2" fill="#3b3b3b"/><circle cx="737" cy="324" r="2" fill="#3b3b3b"/>
<use href="#dn" x="808" y="320"/>
<path d="M826 321L829 313 832 321M827 318.500H831M836 322H840M840 322V327H834" stroke="#6a7486" stroke-width="1"/>
<use href="#dn" x="927" y="320"/>
<path d="M1365.500 368H1372.500L1369 372.500Z" fill="#111"/>
<path d="M1392 363V375L1398 369Z" fill="#a3a3a3"/>
<path d="M1391.500 416H1398.500L1395 420.500Z" fill="#111"/>
<path d="M1381 562H1388L1384.500 566Z" fill="#a8a8a8"/>

<!-- red arrow -->
<path d="M474 685L424 632" stroke="#f00" stroke-width="3"/>
<path d="M415 623L432 628 421 638Z" fill="#f00"/>
</svg>
</body></html>
